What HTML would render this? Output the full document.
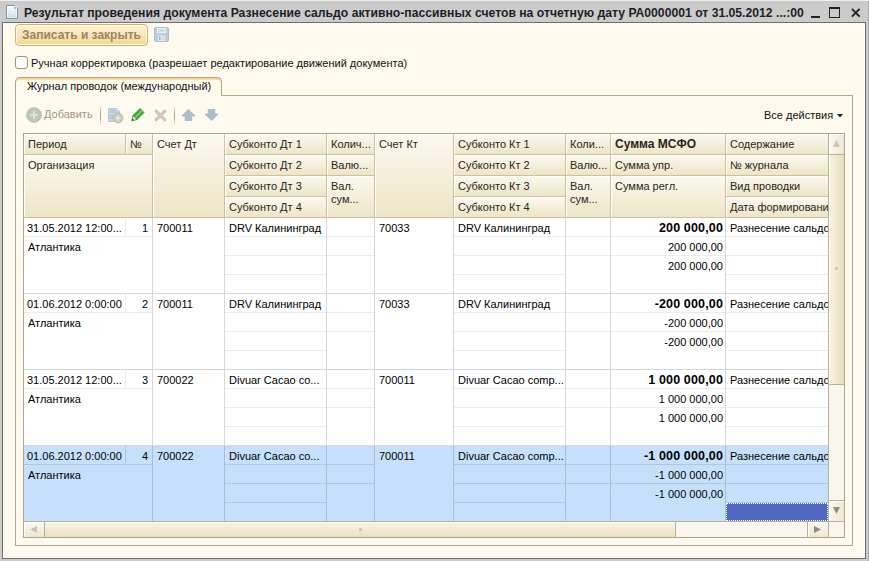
<!DOCTYPE html>
<html><head><meta charset="utf-8">
<style>
*{margin:0;padding:0;box-sizing:border-box}
html,body{width:869px;height:561px;overflow:hidden;background:#cbcbcb;font-family:"Liberation Sans",sans-serif;font-size:11px;color:#111}
.a{position:absolute}
.t{position:absolute;white-space:nowrap;line-height:13px}
#title{left:24px;top:6px;font-weight:bold;font-size:12.2px;color:#1e1e28;line-height:15px}
#frame{left:2px;top:22px;width:864px;height:537px;border:1px solid #6e6e6e;background:#fefaf0}
#btn{left:15px;top:24px;width:133px;height:22px;border:1px solid #d6b25e;border-radius:4px;background:linear-gradient(#fdf3d6,#f1d79a);box-shadow:inset 0 0 0 1px #fff8e8}
#btn span{position:absolute;left:6px;top:3px;font-weight:bold;font-size:12px;color:#9a8658;line-height:14px}
#chk{left:15px;top:56px;width:13px;height:13px;border:1px solid #9d9572;border-radius:3px;background:#fff}
#tab{left:15px;top:77px;width:207px;height:19px;border:1px solid #aea67f;border-bottom:none;border-radius:5px 5px 0 0;background:#fefaf0;box-shadow:inset 0 2px 0 #f8d9a2}
#panel{left:15px;top:95px;width:838px;height:451px;border:1px solid #b3ab85;border-top:none}
#panelTop{left:221px;top:95px;width:632px;height:1px;background:#b3ab85}
.hd{position:absolute;background:linear-gradient(#fbf9f0,#ede5c5);border-right:1px solid #cbc3a0;border-bottom:1px solid #cbc3a0;box-shadow:inset 1px 1px 0 #fffef8}
.hd span{position:absolute;left:4px;top:4px;white-space:nowrap;color:#2c2519;line-height:12px}
.vl{position:absolute;width:1px;background:#d4d8de}
.hl{position:absolute;height:1px;background:#d4d8de}
.sl{position:absolute;height:1px;background:#ececec}
.d{position:absolute;white-space:nowrap;line-height:13px;color:#000}
.r{text-align:right}
.b{font-weight:bold;font-size:12.5px;letter-spacing:0.15px}
.hb{font-weight:bold;font-size:12px}
.sbv{background:linear-gradient(90deg,#fbfaf3,#ede7cf);box-shadow:inset 1px 1px 0 #fff}
.sbt{background:linear-gradient(90deg,#f8f4e2,#e6dfbd);box-shadow:inset 1px 0 0 #fffdf4}
.sbh{background:linear-gradient(#fbfaf3,#ede7cf);box-shadow:inset 1px 1px 0 #fff}
.sbht{background:linear-gradient(#f9f5e6,#e9e1c0);box-shadow:inset 0 1px 0 #fffdf4}
</style></head><body>
<!-- top highlight -->
<div class="a" style="left:0;top:0;width:869px;height:1px;background:#efefef"></div>
<!-- doc icon -->
<svg class="a" style="left:6px;top:5px" width="13" height="15" viewBox="0 0 13 15">
<defs><linearGradient id="dg" x1="0" y1="0" x2="0" y2="1"><stop offset="0" stop-color="#ffffff"/><stop offset="1" stop-color="#c8dcec"/></linearGradient></defs>
<path d="M0.5 0.5 H8.5 L11.5 3.5 V13.5 H0.5 Z" fill="url(#dg)" stroke="#7d92a6"/><path d="M8.5 0.8 V3.5 H11.2 Z" fill="#b9ccda" stroke="#8aa0b2" stroke-width="0.6"/><rect x="1.5" y="1.5" width="9" height="11" fill="none" stroke="#ffffff" stroke-width="0.8" opacity="0.7"/>
</svg>
<div id="title" class="a" style="white-space:nowrap">Результат проведения документа Разнесение сальдо активно-пассивных счетов на отчетную дату РА0000001 от 31.05.2012 ...:00</div>
<!-- window buttons -->
<div class="a" style="left:811px;top:16px;width:9px;height:2px;background:#222"></div>
<div class="a" style="left:829px;top:7px;width:11px;height:11px;border:1px solid #222;border-top-width:2px"></div>
<svg class="a" style="left:851px;top:8px" width="10" height="10" viewBox="0 0 10 10"><path d="M0.9 0.9 L8.6 8.6 M8.6 0.9 L0.9 8.6" stroke="#222" stroke-width="2"/></svg>
<!-- right edge dark line -->
<div class="a" style="left:868px;top:1px;width:1px;height:560px;background:#a9a9a9"></div>

<div id="frame" class="a"></div>

<div id="btn" class="a"><span>Записать и закрыть</span></div>
<!-- save icon -->
<svg class="a" style="left:154px;top:27px" width="15" height="15" viewBox="0 0 15 15">
<rect x="0.5" y="0.5" width="14" height="14" rx="1.5" fill="#bccddc" stroke="#aebfce"/>
<rect x="3" y="1" width="9" height="5" fill="#eef2f2"/>
<rect x="4" y="2" width="7" height="3" fill="#cde0e4"/>
<rect x="4" y="8.5" width="7" height="5.5" fill="#e6eaee"/>
<rect x="5" y="9.5" width="1.5" height="3.5" fill="#9fb4c6"/>
<rect x="7.5" y="9.5" width="2.5" height="3.5" fill="#d4d8dc"/>
</svg>

<div id="chk" class="a"></div>
<div class="t" style="left:31px;top:57px">Ручная корректировка (разрешает редактирование движений документа)</div>

<div id="panel" class="a"></div>
<div id="panelTop" class="a"></div>
<div id="tab" class="a"></div>
<div class="t" style="left:27px;top:80px">Журнал проводок (международный)</div>

<!-- toolbar -->
<svg class="a" style="left:26px;top:107px" width="16" height="16" viewBox="0 0 16 16">
<circle cx="8" cy="8" r="7.3" fill="#bdc9b0" stroke="#a9b3a0" stroke-width="0.8"/><path d="M8 4 V12 M4 8 H12" stroke="#e0e3d8" stroke-width="2"/>
</svg>
<div class="t" style="left:44px;top:108px;color:#a3967a">Добавить</div>
<div class="a" style="left:100px;top:105px;width:1px;height:21px;background:linear-gradient(rgba(181,165,119,0),#b5a577 40%,#b5a577 60%,rgba(181,165,119,0))"></div>
<svg class="a" style="left:108px;top:108px" width="16" height="16" viewBox="0 0 16 16">
<path d="M0.5 0.5 H8.5 L11.5 3.5 V13.5 H0.5 Z" fill="#cdd8e2" stroke="#b6c5d3"/>
<path d="M2 2.5 H7 M2 4 H9 M2 7.5 H6 M2 9 H6 M2 10.5 H6" stroke="#a9bccf" stroke-width="0.9"/>
<circle cx="10" cy="10" r="5" fill="#c3cdb8" stroke="#aeb9a4" stroke-width="0.7"/>
<path d="M10 7.3 V12.7 M7.3 10 H12.7" stroke="#e2e6dc" stroke-width="1.8"/>
</svg>
<svg class="a" style="left:131px;top:108px" width="14" height="14" viewBox="0 0 14 14">
<path d="M2 7.6 L9 0.6 L13 4.6 L6 11.6 Z" fill="#42ab34" stroke="#2b8a22" stroke-width="0.8"/>
<path d="M4.2 9.4 L11 2.6" stroke="#8ede6c" stroke-width="1.3"/>
<path d="M0.8 12.8 L2 7.6 L6 11.6 Z" fill="#f2f4ea" stroke="#2b8a22" stroke-width="0.8"/>
<path d="M0.8 12.8 L1.3 10.3 L3.3 12.3 Z" fill="#1f6a18"/>
</svg>
<svg class="a" style="left:154px;top:109px" width="13" height="13" viewBox="0 0 13 13"><path d="M2.2 2.2 L10.8 10.8 M10.8 2.2 L2.2 10.8" stroke="#c2aaa8" stroke-width="3" stroke-linecap="round"/><path d="M2.2 2.2 L10.8 10.8 M10.8 2.2 L2.2 10.8" stroke="#ddd0cc" stroke-width="1.4" stroke-linecap="round"/></svg>
<div class="a" style="left:174px;top:105px;width:1px;height:21px;background:linear-gradient(rgba(181,165,119,0),#b5a577 40%,#b5a577 60%,rgba(181,165,119,0))"></div>
<svg class="a" style="left:182px;top:109px" width="14" height="12" viewBox="0 0 14 12"><path d="M6.5 0.3 L13.2 7 H9.8 V11.7 H3.2 V7 H-0.2 Z" fill="#aabdcb" stroke="#9aaebd" stroke-width="0.6"/></svg>
<svg class="a" style="left:205px;top:109px" width="14" height="12" viewBox="0 0 14 12"><path d="M6.5 11.7 L13.2 5 H9.8 V0.3 H3.2 V5 H-0.2 Z" fill="#aabdcb" stroke="#9aaebd" stroke-width="0.6"/></svg>
<div class="t" style="left:764px;top:109px">Все действия</div>
<svg class="a" style="left:837px;top:114px" width="6" height="4" viewBox="0 0 6 4"><path d="M0 0 H6 L3 3.5Z" fill="#222"/></svg>

<!-- TABLE -->
<div id="tbl" class="a" style="left:23px;top:133px;width:822px;height:405px;border:1px solid #aea67f;background:#fff"></div>
<!--TBL-->
<div class="hd" style="left:24px;top:134px;width:102px;height:21px"><span>Период</span></div>
<div class="hd" style="left:126px;top:134px;width:27px;height:21px"><span>№</span></div>
<div class="hd" style="left:24px;top:155px;width:129px;height:63px"><span>Организация</span></div>
<div class="hd" style="left:153px;top:134px;width:72px;height:84px"><span>Счет Дт</span></div>
<div class="hd" style="left:225px;top:134px;width:102px;height:21px"><span>Субконто Дт 1</span></div>
<div class="hd" style="left:225px;top:155px;width:102px;height:21px"><span>Субконто Дт 2</span></div>
<div class="hd" style="left:225px;top:176px;width:102px;height:21px"><span>Субконто Дт 3</span></div>
<div class="hd" style="left:225px;top:197px;width:102px;height:21px"><span>Субконто Дт 4</span></div>
<div class="hd" style="left:327px;top:134px;width:48px;height:21px"><span>Колич...</span></div>
<div class="hd" style="left:327px;top:155px;width:48px;height:21px"><span>Валю...</span></div>
<div class="hd" style="left:327px;top:176px;width:48px;height:42px"><span style="line-height:13px">Вал.<br>сум...</span></div>
<div class="hd" style="left:375px;top:134px;width:79px;height:84px"><span>Счет Кт</span></div>
<div class="hd" style="left:454px;top:134px;width:112px;height:21px"><span>Субконто Кт 1</span></div>
<div class="hd" style="left:454px;top:155px;width:112px;height:21px"><span>Субконто Кт 2</span></div>
<div class="hd" style="left:454px;top:176px;width:112px;height:21px"><span>Субконто Кт 3</span></div>
<div class="hd" style="left:454px;top:197px;width:112px;height:21px"><span>Субконто Кт 4</span></div>
<div class="hd" style="left:566px;top:134px;width:45px;height:21px"><span>Коли...</span></div>
<div class="hd" style="left:566px;top:155px;width:45px;height:21px"><span>Валю...</span></div>
<div class="hd" style="left:566px;top:176px;width:45px;height:42px"><span style="line-height:13px">Вал.<br>сум...</span></div>
<div class="hd" style="left:611px;top:134px;width:115px;height:21px"><span class="hb">Сумма МСФО</span></div>
<div class="hd" style="left:611px;top:155px;width:115px;height:21px"><span>Сумма упр.</span></div>
<div class="hd" style="left:611px;top:176px;width:115px;height:42px"><span>Сумма регл.</span></div>
<div class="hd" style="left:726px;top:134px;width:103px;height:21px"><span>Содержание</span></div>
<div class="hd" style="left:726px;top:155px;width:103px;height:21px"><span>№ журнала</span></div>
<div class="hd" style="left:726px;top:176px;width:103px;height:21px"><span>Вид проводки</span></div>
<div class="hd" style="left:726px;top:197px;width:103px;height:21px"><span>Дата формировани</span></div>
<div class="a" style="left:24px;top:218px;width:804px;height:75px;background:#ffffff"></div>
<div class="a" style="left:24px;top:293px;width:804px;height:1px;background:#d4d8de"></div>
<div class="a" style="left:152px;top:218px;width:1px;height:75px;background:#d4d8de"></div>
<div class="a" style="left:224px;top:218px;width:1px;height:75px;background:#d4d8de"></div>
<div class="a" style="left:326px;top:218px;width:1px;height:75px;background:#d4d8de"></div>
<div class="a" style="left:374px;top:218px;width:1px;height:75px;background:#d4d8de"></div>
<div class="a" style="left:453px;top:218px;width:1px;height:75px;background:#d4d8de"></div>
<div class="a" style="left:565px;top:218px;width:1px;height:75px;background:#d4d8de"></div>
<div class="a" style="left:610px;top:218px;width:1px;height:75px;background:#d4d8de"></div>
<div class="a" style="left:725px;top:218px;width:1px;height:75px;background:#d4d8de"></div>
<div class="a" style="left:24px;top:236px;width:128px;height:1px;background:#ececec"></div>
<div class="a" style="left:125px;top:218px;width:1px;height:18px;background:#ececec"></div>
<div class="a" style="left:225px;top:236px;width:101px;height:1px;background:#ececec"></div>
<div class="a" style="left:225px;top:255px;width:101px;height:1px;background:#ececec"></div>
<div class="a" style="left:225px;top:274px;width:101px;height:1px;background:#ececec"></div>
<div class="a" style="left:327px;top:236px;width:47px;height:1px;background:#ececec"></div>
<div class="a" style="left:327px;top:255px;width:47px;height:1px;background:#ececec"></div>
<div class="a" style="left:454px;top:236px;width:111px;height:1px;background:#ececec"></div>
<div class="a" style="left:454px;top:255px;width:111px;height:1px;background:#ececec"></div>
<div class="a" style="left:454px;top:274px;width:111px;height:1px;background:#ececec"></div>
<div class="a" style="left:566px;top:236px;width:44px;height:1px;background:#ececec"></div>
<div class="a" style="left:566px;top:255px;width:44px;height:1px;background:#ececec"></div>
<div class="a" style="left:611px;top:236px;width:114px;height:1px;background:#ececec"></div>
<div class="a" style="left:611px;top:255px;width:114px;height:1px;background:#ececec"></div>
<div class="a" style="left:726px;top:236px;width:102px;height:1px;background:#ececec"></div>
<div class="a" style="left:726px;top:255px;width:102px;height:1px;background:#ececec"></div>
<div class="a" style="left:726px;top:274px;width:102px;height:1px;background:#ececec"></div>
<div class="d" style="left:27px;top:222px">31.05.2012 12:00...</div>
<div class="d r" style="left:126px;top:222px;width:22px">1</div>
<div class="d" style="left:28px;top:241px">Атлантика</div>
<div class="d" style="left:157px;top:222px">700011</div>
<div class="d" style="left:229px;top:222px">DRV Калининград</div>
<div class="d" style="left:379px;top:222px">70033</div>
<div class="d" style="left:458px;top:222px">DRV Калининград</div>
<div class="d r b" style="left:611px;top:222px;width:112px">200 000,00</div>
<div class="d r" style="left:611px;top:241px;width:112px">200 000,00</div>
<div class="d r" style="left:611px;top:260px;width:112px">200 000,00</div>
<div class="d" style="left:730px;top:222px;width:98px;overflow:hidden">Разнесение сальдо</div>
<div class="a" style="left:24px;top:294px;width:804px;height:75px;background:#ffffff"></div>
<div class="a" style="left:24px;top:369px;width:804px;height:1px;background:#d4d8de"></div>
<div class="a" style="left:152px;top:294px;width:1px;height:75px;background:#d4d8de"></div>
<div class="a" style="left:224px;top:294px;width:1px;height:75px;background:#d4d8de"></div>
<div class="a" style="left:326px;top:294px;width:1px;height:75px;background:#d4d8de"></div>
<div class="a" style="left:374px;top:294px;width:1px;height:75px;background:#d4d8de"></div>
<div class="a" style="left:453px;top:294px;width:1px;height:75px;background:#d4d8de"></div>
<div class="a" style="left:565px;top:294px;width:1px;height:75px;background:#d4d8de"></div>
<div class="a" style="left:610px;top:294px;width:1px;height:75px;background:#d4d8de"></div>
<div class="a" style="left:725px;top:294px;width:1px;height:75px;background:#d4d8de"></div>
<div class="a" style="left:24px;top:312px;width:128px;height:1px;background:#ececec"></div>
<div class="a" style="left:125px;top:294px;width:1px;height:18px;background:#ececec"></div>
<div class="a" style="left:225px;top:312px;width:101px;height:1px;background:#ececec"></div>
<div class="a" style="left:225px;top:331px;width:101px;height:1px;background:#ececec"></div>
<div class="a" style="left:225px;top:350px;width:101px;height:1px;background:#ececec"></div>
<div class="a" style="left:327px;top:312px;width:47px;height:1px;background:#ececec"></div>
<div class="a" style="left:327px;top:331px;width:47px;height:1px;background:#ececec"></div>
<div class="a" style="left:454px;top:312px;width:111px;height:1px;background:#ececec"></div>
<div class="a" style="left:454px;top:331px;width:111px;height:1px;background:#ececec"></div>
<div class="a" style="left:454px;top:350px;width:111px;height:1px;background:#ececec"></div>
<div class="a" style="left:566px;top:312px;width:44px;height:1px;background:#ececec"></div>
<div class="a" style="left:566px;top:331px;width:44px;height:1px;background:#ececec"></div>
<div class="a" style="left:611px;top:312px;width:114px;height:1px;background:#ececec"></div>
<div class="a" style="left:611px;top:331px;width:114px;height:1px;background:#ececec"></div>
<div class="a" style="left:726px;top:312px;width:102px;height:1px;background:#ececec"></div>
<div class="a" style="left:726px;top:331px;width:102px;height:1px;background:#ececec"></div>
<div class="a" style="left:726px;top:350px;width:102px;height:1px;background:#ececec"></div>
<div class="d" style="left:27px;top:298px">01.06.2012 0:00:00</div>
<div class="d r" style="left:126px;top:298px;width:22px">2</div>
<div class="d" style="left:28px;top:317px">Атлантика</div>
<div class="d" style="left:157px;top:298px">700011</div>
<div class="d" style="left:229px;top:298px">DRV Калининград</div>
<div class="d" style="left:379px;top:298px">70033</div>
<div class="d" style="left:458px;top:298px">DRV Калининград</div>
<div class="d r b" style="left:611px;top:298px;width:112px">-200 000,00</div>
<div class="d r" style="left:611px;top:317px;width:112px">-200 000,00</div>
<div class="d r" style="left:611px;top:336px;width:112px">-200 000,00</div>
<div class="d" style="left:730px;top:298px;width:98px;overflow:hidden">Разнесение сальдо</div>
<div class="a" style="left:24px;top:370px;width:804px;height:75px;background:#ffffff"></div>
<div class="a" style="left:24px;top:445px;width:804px;height:1px;background:#d4d8de"></div>
<div class="a" style="left:152px;top:370px;width:1px;height:75px;background:#d4d8de"></div>
<div class="a" style="left:224px;top:370px;width:1px;height:75px;background:#d4d8de"></div>
<div class="a" style="left:326px;top:370px;width:1px;height:75px;background:#d4d8de"></div>
<div class="a" style="left:374px;top:370px;width:1px;height:75px;background:#d4d8de"></div>
<div class="a" style="left:453px;top:370px;width:1px;height:75px;background:#d4d8de"></div>
<div class="a" style="left:565px;top:370px;width:1px;height:75px;background:#d4d8de"></div>
<div class="a" style="left:610px;top:370px;width:1px;height:75px;background:#d4d8de"></div>
<div class="a" style="left:725px;top:370px;width:1px;height:75px;background:#d4d8de"></div>
<div class="a" style="left:24px;top:388px;width:128px;height:1px;background:#ececec"></div>
<div class="a" style="left:125px;top:370px;width:1px;height:18px;background:#ececec"></div>
<div class="a" style="left:225px;top:388px;width:101px;height:1px;background:#ececec"></div>
<div class="a" style="left:225px;top:407px;width:101px;height:1px;background:#ececec"></div>
<div class="a" style="left:225px;top:426px;width:101px;height:1px;background:#ececec"></div>
<div class="a" style="left:327px;top:388px;width:47px;height:1px;background:#ececec"></div>
<div class="a" style="left:327px;top:407px;width:47px;height:1px;background:#ececec"></div>
<div class="a" style="left:454px;top:388px;width:111px;height:1px;background:#ececec"></div>
<div class="a" style="left:454px;top:407px;width:111px;height:1px;background:#ececec"></div>
<div class="a" style="left:454px;top:426px;width:111px;height:1px;background:#ececec"></div>
<div class="a" style="left:566px;top:388px;width:44px;height:1px;background:#ececec"></div>
<div class="a" style="left:566px;top:407px;width:44px;height:1px;background:#ececec"></div>
<div class="a" style="left:611px;top:388px;width:114px;height:1px;background:#ececec"></div>
<div class="a" style="left:611px;top:407px;width:114px;height:1px;background:#ececec"></div>
<div class="a" style="left:726px;top:388px;width:102px;height:1px;background:#ececec"></div>
<div class="a" style="left:726px;top:407px;width:102px;height:1px;background:#ececec"></div>
<div class="a" style="left:726px;top:426px;width:102px;height:1px;background:#ececec"></div>
<div class="d" style="left:27px;top:374px">31.05.2012 12:00...</div>
<div class="d r" style="left:126px;top:374px;width:22px">3</div>
<div class="d" style="left:28px;top:393px">Атлантика</div>
<div class="d" style="left:157px;top:374px">700022</div>
<div class="d" style="left:229px;top:374px">Divuar Cacao co...</div>
<div class="d" style="left:379px;top:374px">700011</div>
<div class="d" style="left:458px;top:374px">Divuar Cacao comp...</div>
<div class="d r b" style="left:611px;top:374px;width:112px">1 000 000,00</div>
<div class="d r" style="left:611px;top:393px;width:112px">1 000 000,00</div>
<div class="d r" style="left:611px;top:412px;width:112px">1 000 000,00</div>
<div class="d" style="left:730px;top:374px;width:98px;overflow:hidden">Разнесение сальдо</div>
<div class="a" style="left:24px;top:446px;width:804px;height:75px;background:#c6e0fc"></div>
<div class="a" style="left:152px;top:446px;width:1px;height:75px;background:#a6bed6"></div>
<div class="a" style="left:224px;top:446px;width:1px;height:75px;background:#a6bed6"></div>
<div class="a" style="left:326px;top:446px;width:1px;height:75px;background:#a6bed6"></div>
<div class="a" style="left:374px;top:446px;width:1px;height:75px;background:#a6bed6"></div>
<div class="a" style="left:453px;top:446px;width:1px;height:75px;background:#a6bed6"></div>
<div class="a" style="left:565px;top:446px;width:1px;height:75px;background:#a6bed6"></div>
<div class="a" style="left:610px;top:446px;width:1px;height:75px;background:#a6bed6"></div>
<div class="a" style="left:725px;top:446px;width:1px;height:75px;background:#a6bed6"></div>
<div class="a" style="left:24px;top:464px;width:128px;height:1px;background:#afc8e0"></div>
<div class="a" style="left:125px;top:446px;width:1px;height:18px;background:#afc8e0"></div>
<div class="a" style="left:225px;top:464px;width:101px;height:1px;background:#afc8e0"></div>
<div class="a" style="left:225px;top:483px;width:101px;height:1px;background:#afc8e0"></div>
<div class="a" style="left:225px;top:502px;width:101px;height:1px;background:#afc8e0"></div>
<div class="a" style="left:327px;top:464px;width:47px;height:1px;background:#afc8e0"></div>
<div class="a" style="left:327px;top:483px;width:47px;height:1px;background:#afc8e0"></div>
<div class="a" style="left:454px;top:464px;width:111px;height:1px;background:#afc8e0"></div>
<div class="a" style="left:454px;top:483px;width:111px;height:1px;background:#afc8e0"></div>
<div class="a" style="left:454px;top:502px;width:111px;height:1px;background:#afc8e0"></div>
<div class="a" style="left:566px;top:464px;width:44px;height:1px;background:#afc8e0"></div>
<div class="a" style="left:566px;top:483px;width:44px;height:1px;background:#afc8e0"></div>
<div class="a" style="left:611px;top:464px;width:114px;height:1px;background:#afc8e0"></div>
<div class="a" style="left:611px;top:483px;width:114px;height:1px;background:#afc8e0"></div>
<div class="a" style="left:726px;top:464px;width:102px;height:1px;background:#afc8e0"></div>
<div class="a" style="left:726px;top:483px;width:102px;height:1px;background:#afc8e0"></div>
<div class="a" style="left:726px;top:502px;width:102px;height:1px;background:#afc8e0"></div>
<div class="d" style="left:27px;top:450px">01.06.2012 0:00:00</div>
<div class="d r" style="left:126px;top:450px;width:22px">4</div>
<div class="d" style="left:28px;top:469px">Атлантика</div>
<div class="d" style="left:157px;top:450px">700022</div>
<div class="d" style="left:229px;top:450px">Divuar Cacao co...</div>
<div class="d" style="left:379px;top:450px">700011</div>
<div class="d" style="left:458px;top:450px">Divuar Cacao comp...</div>
<div class="d r b" style="left:611px;top:450px;width:112px">-1 000 000,00</div>
<div class="d r" style="left:611px;top:469px;width:112px">-1 000 000,00</div>
<div class="d r" style="left:611px;top:488px;width:112px">-1 000 000,00</div>
<div class="d" style="left:730px;top:450px;width:98px;overflow:hidden">Разнесение сальдо</div>
<div class="a" style="left:726px;top:503px;width:102px;height:18px;background:#5068c0;border:1px dotted #fff"></div>
<div class="a" style="left:828px;top:134px;width:1px;height:387px;background:#b9b190"></div>
<div class="a sbv" style="left:829px;top:134px;width:15px;height:20px"></div>
<div class="a" style="left:829px;top:154px;width:15px;height:1px;background:#b9b190"></div>
<svg class="a" style="left:833px;top:140px" width="7" height="7" viewBox="0 0 7 7"><path d="M3.5 0 L7 7 H0Z" fill="#c8c6b8"/></svg>
<div class="a sbt" style="left:829px;top:155px;width:15px;height:229px"></div>
<div class="a" style="left:829px;top:384px;width:15px;height:1px;background:#b9b190"></div>
<div class="a" style="left:829px;top:385px;width:15px;height:115px;background:#f8f6ef"></div>
<div class="a" style="left:829px;top:500px;width:15px;height:1px;background:#b9b190"></div>
<div class="a sbv" style="left:829px;top:501px;width:15px;height:20px"></div>
<svg class="a" style="left:833px;top:507px" width="7" height="7" viewBox="0 0 7 7"><path d="M0 0 H7 L3.5 7Z" fill="#8f8d80"/></svg>
<div class="a" style="left:835px;top:267px;width:3px;height:3px;border-radius:50%;background:#c5c0a8"></div>
<div class="a" style="left:24px;top:521px;width:820px;height:1px;background:#b9b190"></div>
<div class="a sbh" style="left:24px;top:522px;width:20px;height:15px"></div>
<div class="a" style="left:44px;top:522px;width:1px;height:15px;background:#b9b190"></div>
<svg class="a" style="left:30px;top:526px" width="7" height="7" viewBox="0 0 7 7"><path d="M7 0 V7 L0 3.5Z" fill="#c8c6b8"/></svg>
<div class="a sbht" style="left:45px;top:522px;width:630px;height:15px"></div>
<div class="a" style="left:675px;top:522px;width:1px;height:15px;background:#b9b190"></div>
<div class="a" style="left:676px;top:522px;width:131px;height:15px;background:#f8f6ef"></div>
<div class="a" style="left:807px;top:522px;width:1px;height:15px;background:#b9b190"></div>
<div class="a sbh" style="left:808px;top:522px;width:20px;height:15px"></div>
<svg class="a" style="left:814px;top:526px" width="7" height="7" viewBox="0 0 7 7"><path d="M0 0 V7 L7 3.5Z" fill="#8f8d80"/></svg>
<div class="a" style="left:828px;top:522px;width:1px;height:15px;background:#b9b190"></div>
<div class="a" style="left:829px;top:522px;width:15px;height:15px;background:#f8f6ef"></div>
<div class="a" style="left:359px;top:528px;width:3px;height:3px;border-radius:50%;background:#c5c0a8"></div>
<!--/TBL-->
</body></html>
